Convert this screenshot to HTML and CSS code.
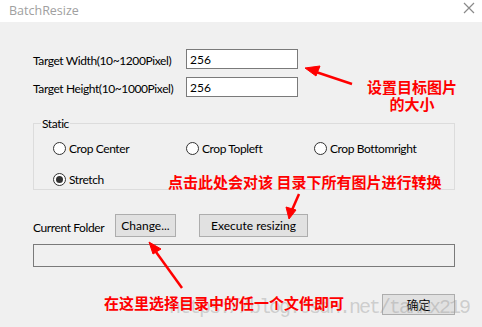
FILE: index.html
```html
<!DOCTYPE html>
<html lang="zh">
<head>
  <meta charset="UTF-8">
  <title>BatchResize</title>
  <link rel="stylesheet" href="styles.css">
</head>
<body>
  <div class="window">
    <div class="titlebar">
      <span class="title">BatchResize</span>
      <svg class="close" width="12" height="12" viewBox="0 0 12 12"><path d="M1 1L11 11M11 1L1 11" stroke="#8a8a8a" stroke-width="1.2"/></svg>
    </div>

    <div class="content">
      <div class="sizes">
        <label for="w">Target Width(10~1200Pixel)</label>
        <input type="text" id="w" value="256">
        <label for="h">Target Height(10~1000Pixel)</label>
        <input type="text" id="h" value="256">
      </div>

      <fieldset class="group">
        <legend>Static</legend>
        <div class="radios">
          <label class="radio"><input type="radio" name="mode">Crop Center</label>
          <label class="radio"><input type="radio" name="mode">Crop Topleft</label>
          <label class="radio"><input type="radio" name="mode">Crop Bottomright</label>
          <label class="radio"><input type="radio" name="mode" checked>Stretch</label>
        </div>
      </fieldset>

      <div class="folder">
        <span class="folder-label">Current Folder</span>
        <button type="button" class="btn btn-change">Change...</button>
        <button type="button" class="btn btn-exec">Execute resizing</button>
      </div>
      <div class="path"></div>

      <div class="footer">
        <button type="button" class="btn btn-ok">确定</button>
      </div>
    </div>

    <div class="watermark">https://blog.csdn.net/tanmx219</div>

    <!-- annotations -->
    <div class="note note-size">设置目标图片<br>的大小</div>
    <div class="note note-exec">点击此处会对该 目录下所有图片进行转换</div>
    <div class="note note-file">在这里选择目录中的任一个文件即可</div>

    <svg class="arrows" width="482" height="327" viewBox="0 0 482 327">
      <g stroke="#f00" stroke-width="2.5" fill="#f00">
        <line x1="352" y1="84" x2="316" y2="72"/>
        <polygon points="305,68 320,66 316,76" stroke-width="1"/>
        <line x1="299" y1="194" x2="292" y2="210"/>
        <polygon points="289,219 286,207 296,210" stroke-width="1"/>
        <line x1="182" y1="288" x2="156" y2="252"/>
        <polygon points="149,242 161,249 153,254" stroke-width="1"/>
      </g>
    </svg>
  </div>
</body>
</html>
```

FILE: styles.css
```css
html, body {
  margin: 0;
  padding: 0;
}
body {
  font-family: Lato, "Noto Sans", sans-serif;
  font-size: 12px;
  letter-spacing: -0.4px;
  color: #000;
}
.window {
  position: relative;
  width: 482px;
  height: 327px;
  background: #f0f0f0;
  overflow: hidden;
}
.titlebar {
  height: 22px;
  background: #fff;
  display: flex;
  align-items: center;
  justify-content: space-between;
  padding: 0 7px 0 9px;
}
.title {
  font-family: "Open Sans", sans-serif;
  font-size: 12.5px;
  letter-spacing: 0;
  color: #a0a0a0;
  margin-top: -2px;
}
.close {
  margin-top: -6px;
}
.content {
  padding: 27px 27px 0 33px;
}
.sizes {
  display: grid;
  grid-template-columns: 153px 112px;
  row-gap: 8px;
  align-items: center;
}
.sizes label {
  padding-top: 3px;
}
.sizes input {
  box-sizing: border-box;
  width: 112px;
  height: 20px;
  border: 1px solid #7a7a7a;
  background: #fff;
  font: inherit;
  padding: 0 3px;
  margin: 0;
}
.group {
  margin: 19px 0 0;
  padding: 0;
  border: 1px solid #dcdcdc;
  height: 72px;
}
.group legend {
  padding: 0 1px;
  margin-left: 7px;
}
.radios {
  display: grid;
  grid-template-columns: 133px 128px auto;
  row-gap: 17px;
  padding: 10px 0 0 19px;
}
.radio {
  display: flex;
  align-items: center;
  gap: 3px;
  height: 14px;
}
.radio input {
  appearance: none;
  margin: 0;
  width: 13px;
  height: 13px;
  border: 1px solid #333;
  border-radius: 50%;
  background: #fff;
  display: grid;
  place-items: center;
}
.radio input:checked::after {
  content: "";
  width: 7px;
  height: 7px;
  border-radius: 50%;
  background: #333;
}
.folder {
  display: flex;
  align-items: center;
  margin-top: 24px;
}
.folder-label {
  width: 82px;
  padding-top: 4px;
}
.btn {
  box-sizing: border-box;
  height: 23px;
  border: 1px solid #adadad;
  background: #e1e1e1;
  font: inherit;
  color: #000;
  padding: 0;
  margin: 0;
}
.btn-change {
  width: 61px;
}
.btn-exec {
  width: 109px;
  margin-left: 23px;
}
.path {
  box-sizing: border-box;
  height: 23px;
  border: 1px solid #7a7a7a;
  margin-top: 7px;
  width: 422px;
}
.footer {
  display: flex;
  justify-content: flex-end;
  width: 422px;
  margin-top: 27px;
}
.btn-ok {
  width: 73px;
  height: 21px;
  font-family: "Noto Sans CJK SC", sans-serif;
  font-size: 12px;
  letter-spacing: 0;
}
.watermark {
  position: absolute;
  left: 169px;
  top: 296px;
  font-family: "Liberation Mono", monospace;
  font-size: 20px;
  letter-spacing: -2px;
  color: rgba(150, 150, 150, 0.4);
  white-space: nowrap;
}
.note {
  position: absolute;
  font-family: "Noto Sans CJK SC", sans-serif;
  font-weight: bold;
  font-size: 15px;
  letter-spacing: 0;
  color: #f00;
  line-height: 17px;
  white-space: nowrap;
}
.note-size {
  left: 367px;
  top: 78px;
  text-align: center;
}
.note-exec {
  left: 168px;
  top: 173px;
}
.note-file {
  left: 104px;
  top: 294px;
}
.arrows {
  position: absolute;
  left: 0;
  top: 0;
}
```
